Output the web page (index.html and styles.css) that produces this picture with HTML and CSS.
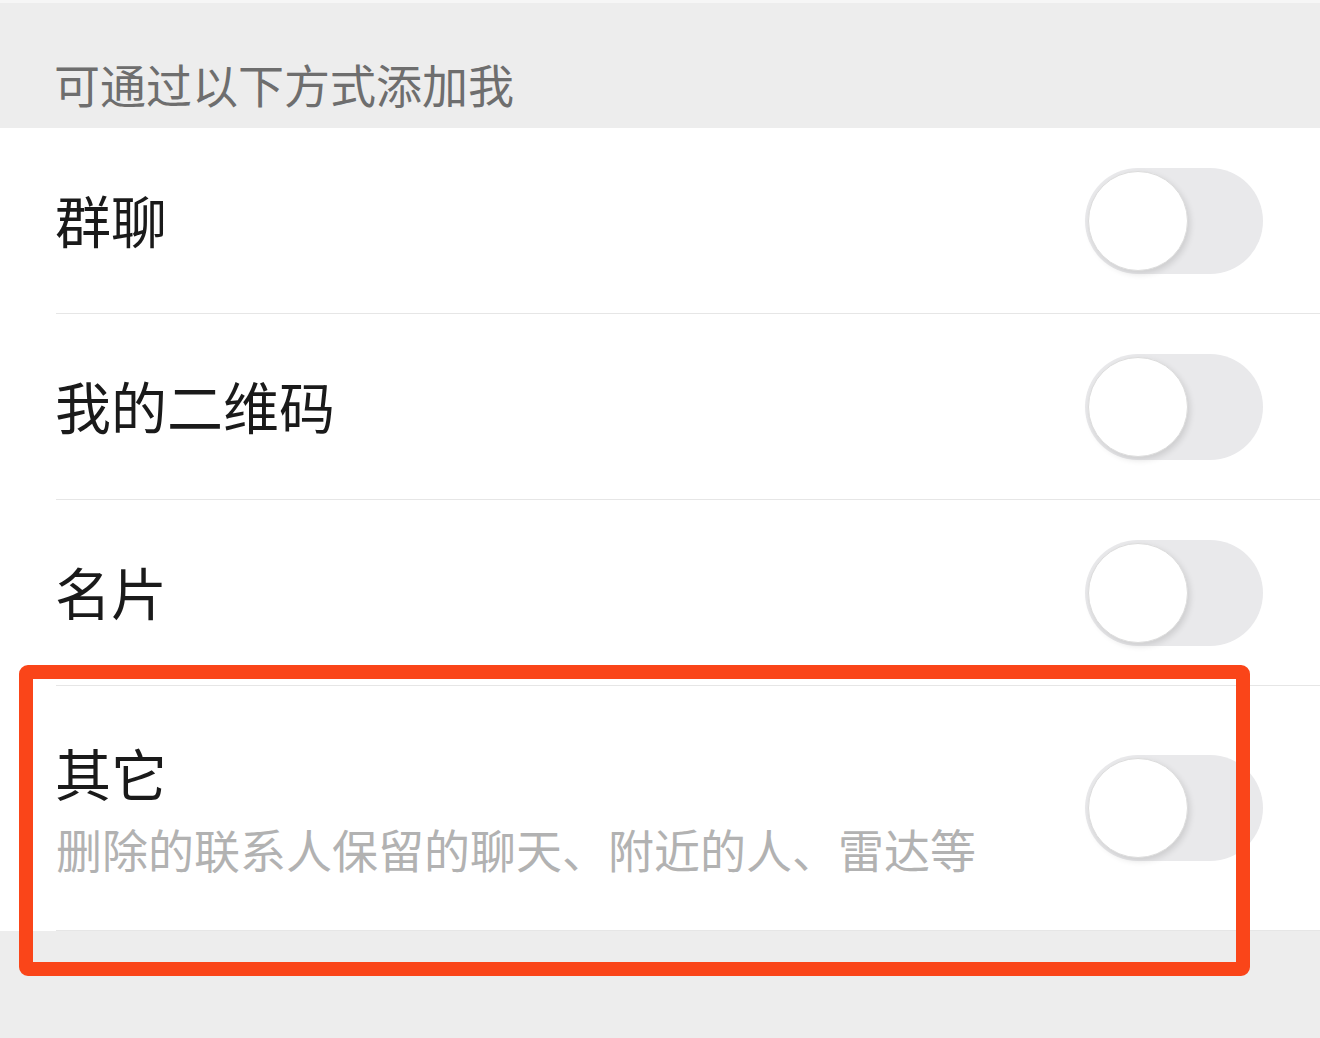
FILE: index.html
```html
<!DOCTYPE html>
<html lang="zh-CN">
<head>
<meta charset="utf-8">
<title>添加我的方式</title>
<link rel="stylesheet" href="styles.css">
</head>
<body>
<div class="page">
  <div class="top-edge"></div>
  <div class="section-header">可通过以下方式添加我</div>
  <div class="list">
    <div class="row">
      <div class="label">群聊</div>
      <div class="switch"><div class="knob"></div></div>
    </div>
    <div class="row">
      <div class="label">我的二维码</div>
      <div class="switch"><div class="knob"></div></div>
    </div>
    <div class="row">
      <div class="label">名片</div>
      <div class="switch"><div class="knob"></div></div>
    </div>
    <div class="row row-tall">
      <div class="text-block">
        <div class="label">其它</div>
        <div class="sublabel">删除的联系人保留的聊天、附近的人、雷达等</div>
      </div>
      <div class="switch"><div class="knob"></div></div>
    </div>
  </div>
  <div class="highlight"></div>
</div>
</body>
</html>
```

FILE: styles.css
```css
html, body {
  margin: 0;
  padding: 0;
  background: #ededed;
}
.page {
  position: relative;
  width: 1320px;
  height: 1038px;
  background: #ededed;
  font-family: "PingFang SC", "Noto Sans CJK SC", "Noto Sans", sans-serif;
  overflow: hidden;
}
.top-edge {
  height: 3px;
  background: #f6f6f6;
}
.section-header {
  height: 125px;
  box-sizing: border-box;
  padding: 57px 0 0 54px;
  font-size: 46px;
  line-height: 46px;
  color: #6e6e6e;
}
.list {
  background: #ffffff;
}
.row {
  margin-left: 56px;
  padding-right: 57px;
  height: 186px;
  box-sizing: border-box;
  display: flex;
  align-items: center;
  justify-content: space-between;
  border-bottom: 1px solid #e6e6e6;
}
.row > .label {
  margin-bottom: 4px;
}
.row-tall {
  height: 245px;
  border-bottom: 1px solid #e6e6e6;
}
.label {
  font-size: 56px;
  line-height: 56px;
  color: #1a1a1a;
  margin-left: -1px;
}
.text-block {
  display: flex;
  flex-direction: column;
  gap: 25px;
  padding-bottom: 2px;
}
.sublabel {
  font-size: 46px;
  line-height: 46px;
  color: #b2b2b2;
  padding-left: 0;
}
.switch {
  width: 178px;
  height: 106px;
  border-radius: 53px;
  background: #e9e9eb;
  position: relative;
  flex: none;
}
.knob {
  position: absolute;
  left: 3px;
  top: 3px;
  width: 98px;
  height: 98px;
  border-radius: 50%;
  background: #ffffff;
  border: 1px solid #dcdcdc;
  box-shadow: 2px 3px 6px rgba(0, 0, 0, 0.12);
}
.highlight {
  position: absolute;
  left: 19px;
  top: 665px;
  width: 1231px;
  height: 311px;
  box-sizing: border-box;
  border: 14px solid #fa4519;
  border-radius: 9px;
}
```
